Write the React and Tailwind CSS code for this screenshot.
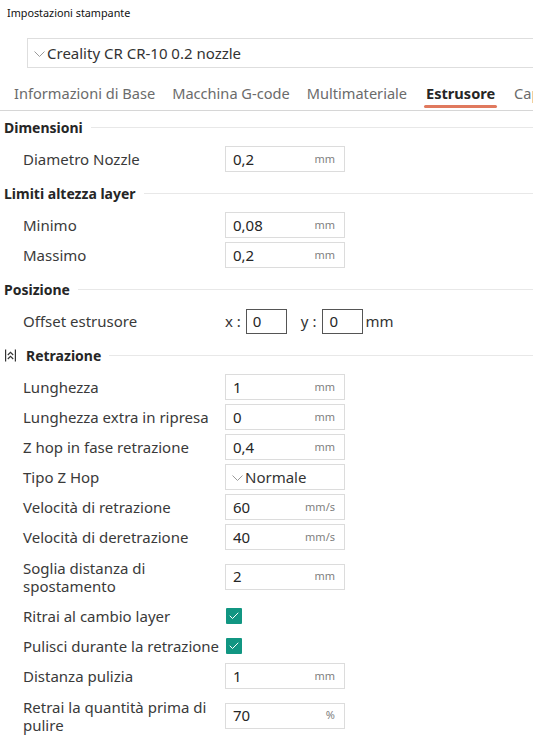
import { Check } from 'lucide-react';

const FONT = { fontFamily: '"Noto Sans", "Open Sans", sans-serif' };

function SectionHeader({ title, icon = false }) {
  return (
    <div className="flex items-center h-[33px] pl-[4px]">
      {icon && (
        <svg width="11" height="13" viewBox="0 0 11 13" className="ml-[1px] mr-[10px] text-[#333]" fill="none" stroke="currentColor" strokeWidth="1.2">
          <path d="M0.6 0.5v12M10.4 0.5v12" />
          <path d="M2.8 6l2.7-2.7 2.7 2.7M2.8 10l2.7-2.7 2.7 2.7" />
        </svg>
      )}
      <span className="text-[14px] font-bold text-[#262626]">{title}</span>
      <div className="flex-1 h-px bg-[#e8e8e8] ml-2" />
    </div>
  );
}

function Label({ children, nowrap = false }) {
  return (
    <div className={`w-[202px] text-[15px] leading-[18px] text-[#3a3a3a] ${nowrap ? 'whitespace-nowrap' : 'pr-2'}`}>
      {children}
    </div>
  );
}

function NumberRow({ label, value, unit, tall = false }) {
  return (
    <div className={`flex items-center pl-[23px] ${tall ? 'h-[49px]' : 'h-[30px]'}`}>
      <Label>{label}</Label>
      <div className="flex items-center w-[120px] h-[26px] border border-[#dcdcdc] bg-white px-[7px]">
        <span className="flex-1 text-[15px] text-[#262626]">{value}</span>
        <span className="text-[11px] text-[#808080] pr-[2px]">{unit}</span>
      </div>
    </div>
  );
}

function CheckRow({ label }) {
  return (
    <div className="flex items-center pl-[23px] h-[30px]">
      <Label nowrap>{label}</Label>
      <div className="flex items-center justify-center w-[16px] h-[16px] ml-[1px] bg-[#119682] rounded-[1px]">
        <Check size={12} strokeWidth={2} color="white" />
      </div>
    </div>
  );
}

function Chevron({ className = '' }) {
  return (
    <svg width="11" height="6" viewBox="0 0 11 6" className={className} fill="none" stroke="#9a9a9a" strokeWidth="1">
      <path d="M0.5 0.5l5 5 5-5" />
    </svg>
  );
}

export default function App() {
  const tabs = ['Informazioni di Base', 'Macchina G-code', 'Multimateriale', 'Estrusore', 'Capacità'];
  return (
    <div className="w-[533px] h-[742px] overflow-hidden bg-white" style={FONT}>
      <div className="h-[27px] pl-[7px] pt-[5px] text-[10.8px] text-[#111]">Impostazioni stampante</div>

      <div className="pl-[27px] pt-[11px]">
        <div className="flex items-center h-[30px] w-[540px] border border-[#dedede] pl-[6px]">
          <Chevron className="mr-[2px] mt-[1px]" />
          <span className="text-[15px] text-[#333]">Creality CR CR-10 0.2 nozzle</span>
        </div>
      </div>

      <div className="flex items-start gap-[17px] pl-[14px] pt-[14px] h-[43px] border-b border-[#d6d6d6] whitespace-nowrap overflow-hidden">
        {tabs.map((t) => (
          <div key={t} className="flex flex-col items-center">
            <span className={`text-[14.6px] leading-[22px] ${t === 'Estrusore' ? 'font-bold text-[#262626]' : 'text-[#6b6b6b]'}`}>{t}</span>
            {t === 'Estrusore' && <div className="w-[73px] h-[3px] mt-[1px] rounded-full bg-[#e0795e]" />}
          </div>
        ))}
      </div>

      <SectionHeader title="Dimensioni" />
      <NumberRow label="Diametro Nozzle" value="0,2" unit="mm" />
      <div className="h-[3px]" />
      <SectionHeader title="Limiti altezza layer" />
      <NumberRow label="Minimo" value="0,08" unit="mm" />
      <NumberRow label="Massimo" value="0,2" unit="mm" />
      <div className="h-[3px]" />
      <SectionHeader title="Posizione" />
      <div className="flex items-center pl-[23px] h-[30px]">
        <Label>Offset estrusore</Label>
        <span className="text-[15px] text-[#333]">x :</span>
        <div className="w-[41px] h-[25px] border border-[#555] ml-[5px] pl-[6px] text-[15px] leading-[23px] text-[#262626]">0</div>
        <span className="text-[15px] text-[#333] ml-[14px]">y :</span>
        <div className="w-[41px] h-[25px] border border-[#555] ml-[6px] pl-[6px] text-[15px] leading-[23px] text-[#262626]">0</div>
        <span className="text-[15px] text-[#333] ml-[2px]">mm</span>
      </div>
      <div className="h-[3px]" />
      <SectionHeader title="Retrazione" icon />
      <NumberRow label="Lunghezza" value="1" unit="mm" />
      <NumberRow label="Lunghezza extra in ripresa" value="0" unit="mm" />
      <NumberRow label="Z hop in fase retrazione" value="0,4" unit="mm" />
      <div className="flex items-center pl-[23px] h-[30px]">
        <Label>Tipo Z Hop</Label>
        <div className="flex items-center w-[120px] h-[26px] border border-[#dcdcdc] pl-[6px]">
          <Chevron className="mr-[2px] mt-[1px]" />
          <span className="text-[15px] text-[#333]">Normale</span>
        </div>
      </div>
      <NumberRow label="Velocità di retrazione" value="60" unit="mm/s" />
      <NumberRow label="Velocità di deretrazione" value="40" unit="mm/s" />
      <NumberRow label={<>Soglia distanza di<br />spostamento</>} value="2" unit="mm" tall />
      <CheckRow label="Ritrai al cambio layer" />
      <CheckRow label="Pulisci durante la retrazione" />
      <NumberRow label="Distanza pulizia" value="1" unit="mm" />
      <NumberRow label={<>Retrai la quantità prima di<br />pulire</>} value="70" unit="%" tall />
    </div>
  );
}
